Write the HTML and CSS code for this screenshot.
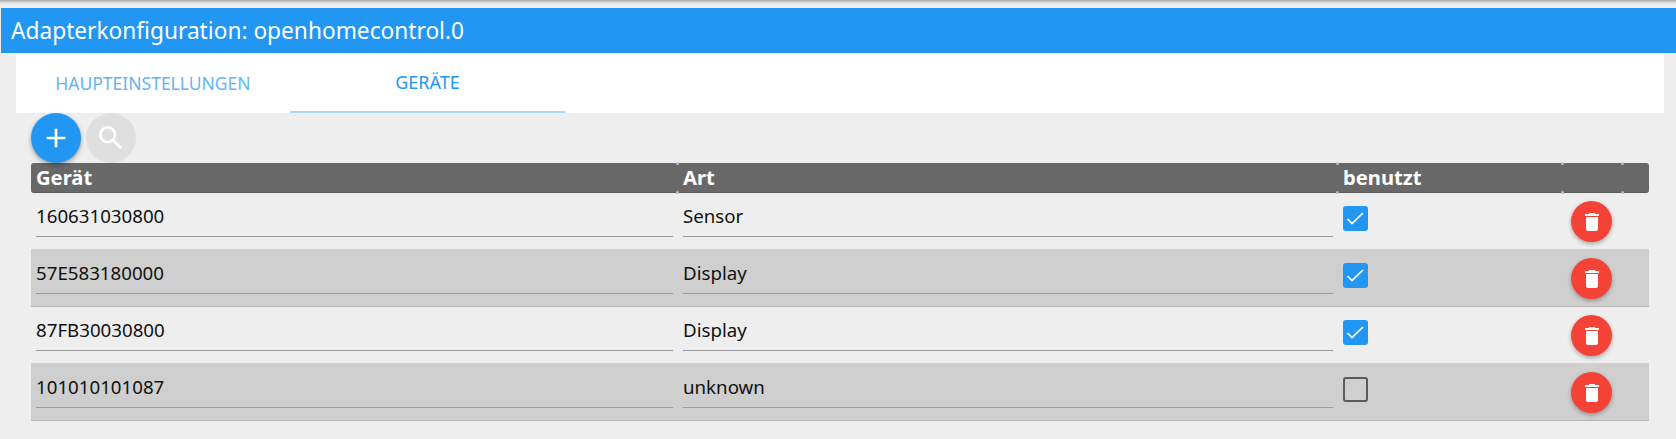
FILE: index.html
```html
<!DOCTYPE html>
<html lang="de">
<head>
<meta charset="utf-8">
<title>Adapterkonfiguration</title>
<link rel="stylesheet" href="styles.css">
</head>
<body>
<div class="strip"></div>
<div class="app">
  <header class="title">Adapterkonfiguration: openhomecontrol.0</header>
  <main class="content">
    <nav class="tabs">
      <a class="tab">HAUPTEINSTELLUNGEN</a>
      <a class="tab active">GERÄTE</a>
    </nav>
    <section class="panel">
      <div class="tools">
        <button class="fab add"><svg width="32" height="32" viewBox="0 0 24 24"><path d="M19 13h-6v6h-2v-6H5v-2h6V5h2v6h6v2z" fill="#fff"/></svg></button>
        <button class="fab search"><svg width="32" height="32" viewBox="0 0 24 24"><path d="M15.5 14h-.79l-.28-.27A6.470 6.470 0 0 0 16 9.500 6.500 6.500 0 1 0 9.500 16c1.610 0 3.090-.59 4.230-1.570l.27.28v.79l5 4.990L20.490 19l-4.990-5zm-6 0C7.010 14 5 11.990 5 9.500S7.010 5 9.500 5 14 7.010 14 9.500 11.990 14 9.500 14z" fill="#fff"/></svg></button>
      </div>
      <div class="table">
        <div class="head">
          <div class="th c1">Gerät</div>
          <div class="th c2">Art</div>
          <div class="th c3">benutzt</div>
          <div class="th c4"></div>
          <div class="th c5 last"></div>
        </div>
        <div class="row">
          <div class="c1 cell"><span class="field">160631030800</span></div>
          <div class="c2 cell"><span class="field">Sensor</span></div>
          <div class="c3 cell"><span class="box on"><svg width="25" height="25" viewBox="0 0 25 25"><path d="M4.500 13l4.500 4.500L20 7" fill="none" stroke="#fff" stroke-width="1.700"/></svg></span></div>
          <div class="c4 cell"><button class="del"><svg width="24" height="24" viewBox="0 0 24 24"><path d="M6 19c0 1.100.9 2 2 2h8c1.100 0 2-.9 2-2V7H6v12zM19 4h-3.500l-1-1h-5l-1 1H5v2h14V4z" fill="#fff"/></svg></button></div>
          <div class="c5"></div>
        </div>
        <div class="row alt">
          <div class="c1 cell"><span class="field">57E583180000</span></div>
          <div class="c2 cell"><span class="field">Display</span></div>
          <div class="c3 cell"><span class="box on"><svg width="25" height="25" viewBox="0 0 25 25"><path d="M4.500 13l4.500 4.500L20 7" fill="none" stroke="#fff" stroke-width="1.700"/></svg></span></div>
          <div class="c4 cell"><button class="del"><svg width="24" height="24" viewBox="0 0 24 24"><path d="M6 19c0 1.100.9 2 2 2h8c1.100 0 2-.9 2-2V7H6v12zM19 4h-3.500l-1-1h-5l-1 1H5v2h14V4z" fill="#fff"/></svg></button></div>
          <div class="c5"></div>
        </div>
        <div class="row">
          <div class="c1 cell"><span class="field">87FB30030800</span></div>
          <div class="c2 cell"><span class="field">Display</span></div>
          <div class="c3 cell"><span class="box on"><svg width="25" height="25" viewBox="0 0 25 25"><path d="M4.500 13l4.500 4.500L20 7" fill="none" stroke="#fff" stroke-width="1.700"/></svg></span></div>
          <div class="c4 cell"><button class="del"><svg width="24" height="24" viewBox="0 0 24 24"><path d="M6 19c0 1.100.9 2 2 2h8c1.100 0 2-.9 2-2V7H6v12zM19 4h-3.500l-1-1h-5l-1 1H5v2h14V4z" fill="#fff"/></svg></button></div>
          <div class="c5"></div>
        </div>
        <div class="row alt">
          <div class="c1 cell"><span class="field">101010101087</span></div>
          <div class="c2 cell"><span class="field">unknown</span></div>
          <div class="c3 cell"><span class="box"></span></div>
          <div class="c4 cell"><button class="del"><svg width="24" height="24" viewBox="0 0 24 24"><path d="M6 19c0 1.100.9 2 2 2h8c1.100 0 2-.9 2-2V7H6v12zM19 4h-3.500l-1-1h-5l-1 1H5v2h14V4z" fill="#fff"/></svg></button></div>
          <div class="c5"></div>
        </div>
      </div>
    </section>
  </main>
</div>
</body>
</html>
```
FILE: styles.css
```css
* { box-sizing: border-box; }
html, body { margin: 0; height: 439px; overflow: hidden; }
body { background: #eee; font-family: "Noto Sans", "Open Sans", sans-serif; color: #111; }
.strip { height: 8px; background: linear-gradient(#a4a4a4 0, #e6e6e6 3px, #efefef 5px); }
.app { padding-left: 1px; }
.title { height: 45px; background: #2196f3; color: #fff; font-size: 22.7px; line-height: 45px; padding-left: 10px; white-space: nowrap; }
.content { padding: 0 12px 0 15px; }
.tabs { display: flex; height: 60px; background: #fff; }
.tab { display: flex; align-items: center; justify-content: center; width: 274px; color: #64b5f6; font-size: 17.5px; }
.tab.active { width: 275px; color: #2196f3; font-size: 18px; border-bottom: 2px solid #aad6fa; }
.panel { padding-left: 15px; }
.tools { display: flex; gap: 5px; height: 50px; }
.fab { width: 50px; height: 50px; border: 0; border-radius: 50%; padding: 0; display: flex; align-items: center; justify-content: center; }
.add { background: #2196f3; box-shadow: 0 2px 4px rgba(0,0,0,.35); }
.search { background: #dfdfdf; }
.table { width: 1618px; }
.head { display: flex; height: 30px; background: #686868; border-bottom: 1px solid #5c5c5c; border-radius: 3px; color: #fff; font-weight: 700; font-size: 20.2px; line-height: 28px; }
.th { padding-left: 5px; position: relative; }
.th:not(.last)::before, .th:not(.last)::after { content: ""; position: absolute; right: -1px; width: 3px; height: 3px; border-radius: 50%; background: #bdbdbd; }
.th:not(.last)::before { top: -1px; }
.th:not(.last)::after { bottom: -2px; }
.row { display: flex; height: 56px; }
.row.alt { height: 58px; background: #cfcfcf; border-bottom: 1px solid #b5b5b5; }
.c1 { width: 647px; }
.c2 { width: 660px; }
.c3 { width: 225px; }
.c4 { width: 60px; }
.c5 { width: 26px; }
.cell { padding-left: 5px; }
.c1.cell, .c2.cell { padding-right: 5px; }
.field { display: block; height: 44px; border-bottom: 1px solid #999; font-size: 18.7px; line-height: 46px; white-space: nowrap; }
.alt .field { height: 45px; line-height: 47px; }
.box { display: block; width: 25px; height: 25px; margin-top: 13px; border: 2px solid #5a5a5a; border-radius: 3px; }
.alt .box { margin-top: 14px; }
.box.on { background: #2196f3; border: 0; }
.box svg { display: block; }
.del { display: flex; align-items: center; justify-content: center; width: 41px; height: 41px; margin: 8px 0 0 3px; border: 0; padding: 0; border-radius: 50%; background: #f44336; box-shadow: 0 2px 4px rgba(0,0,0,.3); }
.alt .del { margin-top: 9px; }
```
